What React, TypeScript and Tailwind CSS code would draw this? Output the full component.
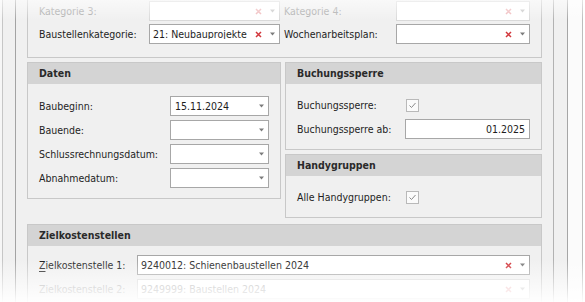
import React from "react";

function XMark({ light = false }: { light?: boolean }) {
  return (
    <svg width="7" height="7" viewBox="0 0 7 7" className="shrink-0">
      <path d="M1 1L6 6M6 1L1 6" stroke={light ? "#efb7b9" : "#d2373c"} strokeWidth="1.5" />
    </svg>
  );
}

function Arrow({ light = false }: { light?: boolean }) {
  return (
    <svg width="7" height="4" viewBox="0 0 7 4" className="shrink-0">
      <path d="M1 0.5h5L3.5 3.5z" fill={light ? "#c9c9c9" : "#7c7c7c"} />
    </svg>
  );
}

function Combo({
  text = "",
  width,
  disabled = false,
  clear = true,
}: {
  text?: string;
  width: string;
  disabled?: boolean;
  clear?: boolean;
}) {
  return (
    <div
      className={`${width} h-[20px] shrink-0 flex items-center bg-white border pl-[3px] ${
        disabled ? "border-[#d9d9d9] text-[#a8a8a8]" : "border-[#a7a7a7] text-[#1e1e1e]"
      }`}
    >
      <span className="flex-1 truncate">{text}</span>
      {clear && (
        <span className="mr-[7px] flex">
          <XMark light={disabled} />
        </span>
      )}
      <span className="mr-[3px] flex">
        <Arrow light={disabled} />
      </span>
    </div>
  );
}

function Check() {
  return (
    <div className="ml-[1px] w-[13px] h-[13px] border border-[#b9b9b9] bg-[#fbfbfb] flex items-center justify-center">
      <svg width="11" height="11" viewBox="0 0 11 11">
        <path d="M2.5 5.5L4.5 7.5L8.5 3" stroke="#8a8a8a" strokeWidth="1" fill="none" />
      </svg>
    </div>
  );
}

function Header({ title }: { title: string }) {
  return (
    <div className="h-[21px] bg-[#d4d4d4] pl-[11px] flex items-center font-bold text-[#2a2a2a]">
      {title}
    </div>
  );
}

export default function App() {
  return (
    <div className="relative w-[585px] h-[302px] overflow-hidden bg-white text-[10.5px] leading-none text-[#1e1e1e] [font-family:'DejaVu_Sans_Condensed','DejaVu_Sans',sans-serif]">
      <div className="flex h-full">
        <div className="w-[2px] bg-[#f6f6f6]" />
        <div className="w-[13px] border-l border-[#c6c6c6] bg-[#f0f0f0]" />
        <div className="w-[538px] border-l border-[#a3a3a3] bg-[#f0f0f0] px-[11px]">
          <div className="-mt-[10px] flex flex-col">
            {/* Top group */}
            <div className="border border-[#c8c8c8] pt-[10px] pb-[13px] pl-[11px] pr-[11px] flex flex-col gap-[3px]">
              <div className="flex items-center h-[20px]">
                <span className="w-[110px] text-[#ababab]">Kategorie 3:</span>
                <Combo width="w-[131px]" disabled />
                <span className="w-[112px] ml-[4px] text-[#ababab]">Kategorie 4:</span>
                <Combo width="w-[134px]" disabled />
              </div>
              <div className="flex items-center h-[20px]">
                <span className="w-[110px]">Baustellenkategorie:</span>
                <Combo width="w-[131px]" text="21: Neubauprojekte" />
                <span className="w-[112px] ml-[4px]">Wochenarbeitsplan:</span>
                <Combo width="w-[134px]" />
              </div>
            </div>

            {/* Middle row */}
            <div className="mt-[4px] flex items-start gap-[4px]">
              <div className="w-[254px] border border-[#c8c8c8]">
                <Header title="Daten" />
                <div className="pt-[12px] pb-[10px] px-[11px] flex flex-col gap-[4px]">
                  {[
                    ["Baubeginn:", "15.11.2024"],
                    ["Bauende:", ""],
                    ["Schlussrechnungsdatum:", ""],
                    ["Abnahmedatum:", ""],
                  ].map(([l, v]) => (
                    <div key={l} className="flex items-center h-[20px]">
                      <span className="w-[131px]">{l}</span>
                      <div className="w-[99px] h-[20px] bg-white border border-[#a7a7a7] flex items-center pl-[4px]">
                        <span className="flex-1">{v}</span>
                        <span className="mr-[3px] flex">
                          <Arrow />
                        </span>
                      </div>
                    </div>
                  ))}
                </div>
              </div>

              <div className="w-[257px] flex flex-col gap-[4px]">
                <div className="border border-[#c8c8c8]">
                  <Header title="Buchungssperre" />
                  <div className="pt-[11px] pb-[10px] px-[11px] flex flex-col gap-[4px]">
                    <div className="flex items-center h-[20px]">
                      <span className="w-[108px]">Buchungssperre:</span>
                      <Check />
                    </div>
                    <div className="flex items-center h-[20px]">
                      <span className="w-[108px]">Buchungssperre ab:</span>
                      <div className="w-[125px] h-[20px] bg-white border border-[#a7a7a7] flex items-center justify-end pr-[4px]">
                        01.2025
                      </div>
                    </div>
                  </div>
                </div>
                <div className="border border-[#c8c8c8]">
                  <Header title="Handygruppen" />
                  <div className="pt-[11px] pb-[10px] px-[11px]">
                    <div className="flex items-center h-[20px]">
                      <span className="w-[108px]">Alle Handygruppen:</span>
                      <Check />
                    </div>
                  </div>
                </div>
              </div>
            </div>

            {/* Zielkostenstellen */}
            <div className="mt-[6px] border border-[#c8c8c8]">
              <Header title="Zielkostenstellen" />
              <div className="pt-[9px] pb-[10px] px-[11px] flex flex-col gap-[4px]">
                <div className="flex items-center h-[20px]">
                  <span className="w-[98px]">
                    <span className="underline underline-offset-2">Z</span>ielkostenstelle 1:
                  </span>
                  <Combo width="w-[393px]" text="9240012: Schienenbaustellen 2024" />
                </div>
                <div className="flex items-center h-[20px]">
                  <span className="w-[98px] text-[#a8a8a8]">Zielkostenstelle 2:</span>
                  <Combo width="w-[393px]" text="9249999: Baustellen 2024" disabled />
                </div>
              </div>
            </div>
          </div>
        </div>
        <div className="w-[14px] border-l border-[#b2b2b2] bg-[#f0f0f0]" />
        <div className="w-[15px] border-l border-[#a6a6a6] bg-[#fbfbfb]" />
        <div className="w-[3px] border-l border-[#bdbdbd] bg-white" />
      </div>

      {/* fades */}
      <div className="pointer-events-none absolute inset-x-0 top-0 h-[20px] bg-gradient-to-b from-white/60 to-transparent" />
      <div className="pointer-events-none absolute inset-x-0 bottom-0 h-[42px] bg-gradient-to-b from-transparent to-white/95" />
    </div>
  );
}
